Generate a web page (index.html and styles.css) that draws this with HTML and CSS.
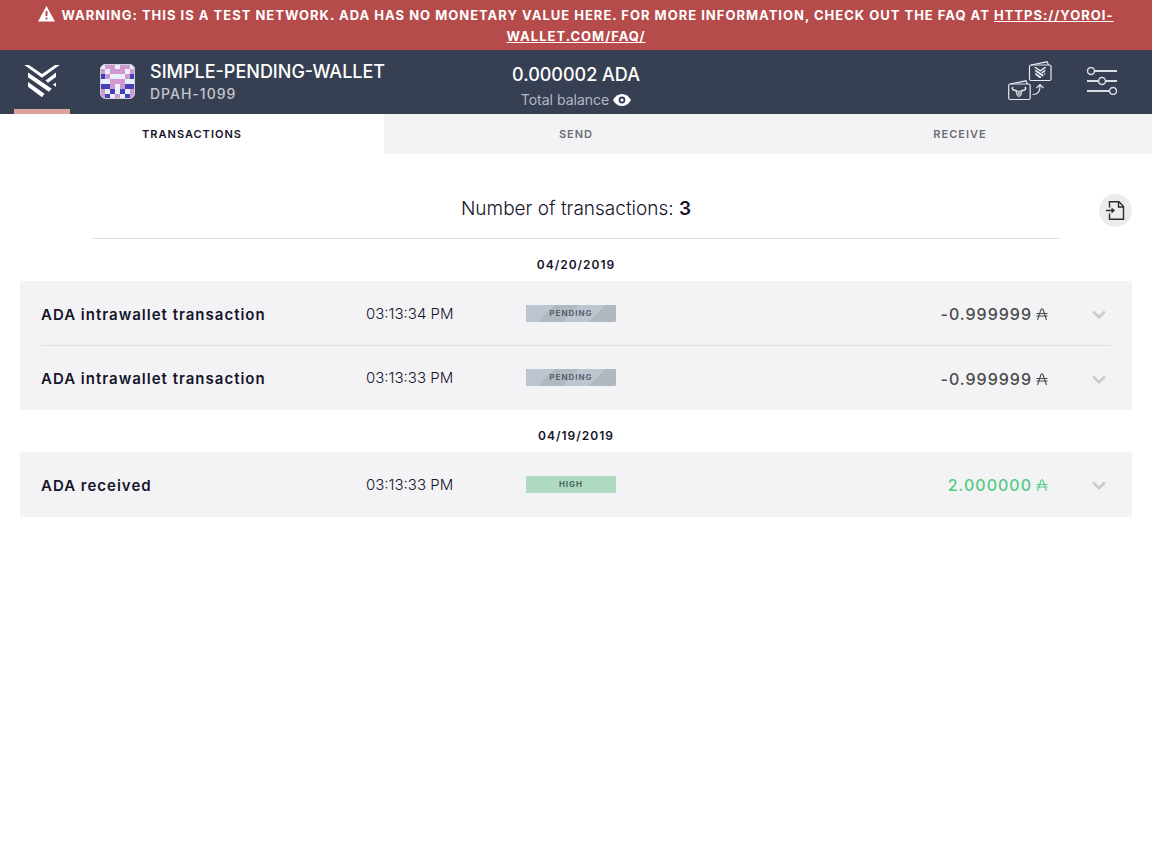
FILE: index.html
```html
<!DOCTYPE html>
<html lang="en">
<head>
<meta charset="utf-8">
<title>Wallet transactions</title>
<meta name="viewport" content="width=device-width, initial-scale=1">
<link rel="stylesheet" href="styles.css">
</head>
<body>
<svg class="sprite" aria-hidden="true">
  <symbol id="chevron" viewBox="0 0 14 9"><path d="M1.200 1.500 7 7.200 12.800 1.500" fill="none" stroke="#c9cacc" stroke-width="2.500"/></symbol>
  <symbol id="ada" viewBox="0 0 12 12"><path d="M1.500 12 5 1.500Q6 0 7 1.500L10.500 12M.500 5.500h11M.500 8h11" fill="none" stroke="currentColor" stroke-width="1.100"/></symbol>
  <symbol id="brand" viewBox="0 0 36 33"><path d="M.300 0H5L18 9 31 0H35.700L18 12.800zM4 7.500 27.800 23.800 24.800 26.800 4 12.200zM4 17 20.500 28.700 18 32.200 4 21.800zM32 7.500V12L24 17.800 21.500 15.500zM32 17.500V21.800L28.800 19.700z"/></symbol>
</svg>
<div class="banner" role="alert">
  <svg class="warn" viewBox="0 0 17 16" aria-hidden="true"><path d="M8.500 0 17 15.500H0z" fill="#fff"/><path d="M8.500 5v5M8.500 11.500v2" stroke="#b54b4b" stroke-width="2"/></svg>
  Warning: this is a test network. ADA has no monetary value here. For more information, check out the FAQ at <a href="https://yoroi-wallet.com/faq/">https://yoroi-wallet.com/faq/</a>
</div>
<header class="topbar">
  <div class="left">
    <button class="home" aria-label="Wallet"><svg width="36" height="33" fill="#fff"><use href="#brand"/></svg></button>
    <svg class="plate" viewBox="0 0 7 7" shape-rendering="crispEdges" aria-hidden="true">
      <path fill="#cf98cf" d="M0 0h7v7H0z"/>
      <path fill="#e8f0fa" d="M0 0h1v1H0zM3 0h1v1H3zM6 0h1v1H6zM1 1h1v1H1zM5 1h1v1H5zM2 2h3v1H2zM0 3h2v1H0zM5 3h2v1H5zM3 4h1v2H3zM1 5h1v1H1zM5 5h1v1H5zM2 6h1v1H2zM4 6h1v1H4z"/>
      <path fill="#4640b8" d="M0 2h1v1H0zM6 2h1v1H6zM0 4h2v1H0zM5 4h2v1H5zM2 5h1v1H2zM4 5h1v1H4zM1 6h1v1H1zM5 6h1v1H5z"/>
    </svg>
    <div><div class="name">SIMPLE-PENDING-WALLET</div><div class="code">DPAH-1099</div></div>
  </div>
  <div class="balance">
    <div class="amount-total">0.000002 ADA</div>
    <div class="balance-label">Total balance
      <button class="eye" aria-label="Hide balance"><svg width="18" height="12" viewBox="0 0 18 12"><path d="M0 6C4-2 14-2 18 6 14 14 4 14 0 6z" fill="#fff"/><circle cx="9" cy="6" r="2.500" fill="#fff" stroke="#373f52" stroke-width="1.800"/></svg></button>
    </div>
  </div>
  <div class="actions">
    <button aria-label="Wallets"><svg width="44" height="40" viewBox="0 0 44 40" fill="none" stroke="#e6e8ec" stroke-width="1.200"><rect x="21.500" y="4" width="21.500" height="15.500" rx="1.500"/><path d="M23 4 39 .800 40.500 4M2 23 18 19.800 19.500 23"/><rect x=".700" y="23" width="21.500" height="15.500" rx="1.500"/><path d="M24.500 33.500C30 33.500 32 31 32 24M28.500 27 32 23.500 35.500 27"/><use href="#brand" x="26" y="6" width="12.500" height="11.500" fill="#fff" stroke="#fff" stroke-width="1"/><path d="M5 26C3.500 28 5 29.500 8 29.500L9.500 30.500h3L14 29.500c3 0 4.500-1.500 3-3.500" stroke-width="1.500"/><path d="M7.500 30h7l-.8 4-2.700 2.500-2.700-2.500z" fill="#c5c9d0" stroke="none"/><path d="M9 32h1.500M11.500 32H13M10.300 34h1.500" stroke="#373f52" stroke-width=".8"/></svg></button>
    <button aria-label="Settings"><svg width="30" height="28" viewBox="0 0 30 28" fill="none" stroke="#d9dce1" stroke-width="1.500"><path d="M7.500 4H30M0 14h11M19 14h11M0 24h22" stroke-width="2"/><circle cx="4" cy="4" r="3.500"/><circle cx="15" cy="14" r="3.500"/><circle cx="26" cy="24" r="3.500"/></svg></button>
  </div>
</header>
<nav class="tabs">
  <button class="active">Transactions</button><button>Send</button><button>Receive</button>
</nav>
<main>
  <div class="summary">
    <h1>Number of transactions: <b>3</b></h1>
    <button class="export" aria-label="Export"><svg width="19" height="19" viewBox="0 0 19 19" fill="none" stroke="#2b2c32" stroke-width="1.400"><path d="M3.500 6.500V.800H13L17.500 5.500V18.200H3.500V12.500M12.500 .800V6H17.500M0 9.500h7.500"/><path d="M5.500 6.500 9 9.500 5.500 12.500z" fill="#2b2c32" stroke="none"/></svg></button>
  </div>
  <h2>04/20/2019</h2>
  <ul class="group">
    <li><span class="title">ADA intrawallet transaction</span><time>03:13:34 PM</time><span class="status pending">Pending</span><span class="amount">-0.999999 <svg><use href="#ada"/></svg></span><button aria-label="Details"><svg width="14" height="9"><use href="#chevron"/></svg></button></li>
    <li><span class="title">ADA intrawallet transaction</span><time>03:13:33 PM</time><span class="status pending">Pending</span><span class="amount">-0.999999 <svg><use href="#ada"/></svg></span><button aria-label="Details"><svg width="14" height="9"><use href="#chevron"/></svg></button></li>
  </ul>
  <h2>04/19/2019</h2>
  <ul class="group">
    <li><span class="title">ADA received</span><time>03:13:33 PM</time><span class="status high">High</span><span class="amount received">2.000000 <svg><use href="#ada"/></svg></span><button aria-label="Details"><svg width="14" height="9"><use href="#chevron"/></svg></button></li>
  </ul>
</main>
</body>
</html>
```
FILE: styles.css
```css
* { box-sizing: border-box; }
body { margin: 0; background: #fff; color: #15142b; font-family: Inter, "Liberation Sans", sans-serif; }
button { border: 0; padding: 0; background: none; font: inherit; color: inherit; cursor: pointer; }
button svg { display: block; }
h1, h2, ul { margin: 0; padding: 0; }
.sprite { position: absolute; width: 0; height: 0; }

.banner { padding: 5px 16px 3px; background: #b54b4b; color: #fff; font-size: 13px; font-weight: 700; line-height: 21px; letter-spacing: 1px; text-align: center; text-transform: uppercase; }
.banner a { color: inherit; }
.warn { width: 17px; height: 16px; margin-right: 2px; vertical-align: -2px; }

.topbar { display: grid; grid-template-columns: 1fr auto 1fr; height: 64px; padding: 0 35px 0 14px; background: #373f52; color: #fff; }
.left { display: flex; align-items: center; min-width: 0; }
.home { display: flex; justify-content: center; align-self: stretch; width: 56px; margin-right: 30px; padding-top: 15px; border-bottom: 5px solid #daa49a; }
.plate { align-self: flex-start; width: 35px; height: 35px; margin: 14px 15px 0 0; border-radius: 6px; outline: 1px solid #c9d0d6; outline-offset: -1px; }
.name { font-size: 18px; font-weight: 500; line-height: 24px; }
.code { color: #c3c6ce; font-size: 14px; font-weight: 500; line-height: 20px; letter-spacing: 1px; }
.balance { padding: 12px 0 0 21px; text-align: center; }
.amount-total { font-size: 18px; font-weight: 500; line-height: 25px; }
.balance-label { display: flex; align-items: center; justify-content: center; gap: 4px; color: #b4b8c2; font-size: 14px; line-height: 25px; }
.actions { display: flex; align-items: center; justify-content: flex-end; gap: 35px; padding-bottom: 2px; }

.tabs { display: grid; grid-template-columns: repeat(3, 1fr); height: 40px; background: #f3f3f5; }
.tabs button { color: #6b6c76; font-size: 11px; font-weight: 600; letter-spacing: 1px; text-transform: uppercase; }
.tabs .active { background: #fff; color: #15142b; }

main { padding: 38px 20px; }
.summary { display: grid; grid-template-columns: 72px 1fr 72px; height: 47px; }
h1 { grid-column: 2; border-bottom: 1px solid #e1e1e3; font-size: 19px; font-weight: 300; line-height: 34px; text-align: center; }
h1 b { font-weight: 600; }
.export { display: grid; place-items: center; justify-self: end; width: 33px; height: 33px; margin-top: 2px; padding-right: 1px; padding-bottom: 1px; border-radius: 50%; background: #ececed; }
h2 { padding-top: 16px; height: 42px; font-size: 12px; font-weight: 600; line-height: 20px; letter-spacing: 1px; text-align: center; }
.group { padding: 0 21px; background: #f3f3f5; list-style: none; }
.group li { display: grid; grid-template-columns: 325px 160px 90px 1fr 63px; align-items: center; height: 64px; }
.group li:last-child { height: 65px; padding-bottom: 1px; }
.group li + li { border-top: 1px solid #e1e1e3; }
.title { padding-top: 2px; font-size: 15px; font-weight: 600; letter-spacing: 1px; }
time { font-size: 15px; font-weight: 300; }
.status { font-size: 8px; font-weight: 700; line-height: 17px; letter-spacing: 1px; text-align: center; text-transform: uppercase; color: #5b6070; }
.pending { background: repeating-linear-gradient(135deg, #b1b9c0 0 2px, #bdc5d0 2px 20px, #b1b9c0 20px 36px); }
.high { background: #addac1; color: #4b665c; }
.amount { display: flex; align-items: center; justify-content: flex-end; gap: 4px; padding-top: 2px; color: #4a4a4a; font-size: 16px; font-weight: 500; letter-spacing: 1px; }
.amount svg { width: 12px; height: 12px; }
.received { color: #54ca83; }
li button { justify-self: end; margin-right: 5px; padding-top: 3px; }
```
